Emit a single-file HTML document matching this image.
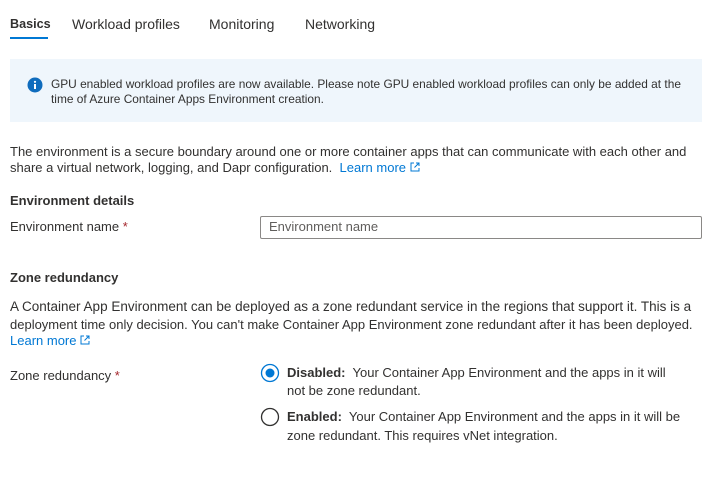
<!DOCTYPE html>
<html><head><meta charset="utf-8"><style>
body{margin:0;width:716px;height:479px;background:#fff;font-family:"Liberation Sans",sans-serif;font-size:13px;color:#323130;position:relative;overflow:hidden}
.a{position:absolute;white-space:nowrap;line-height:16px}
.b{font-weight:bold}
.l{color:#0078d4}
.s{color:#a4262c}
.ext{display:inline-block;margin-left:4px;vertical-align:0px}
</style></head><body>
<div class="a" style="left:10px;top:16px;font-size:12.6px;font-weight:bold">Basics</div>
<div style="position:absolute;left:10px;top:37px;width:38px;height:2px;background:#0078d4"></div>
<div class="a" style="left:72px;top:16px;font-size:14px">Workload profiles</div>
<div class="a" style="left:209px;top:16px;font-size:14px">Monitoring</div>
<div class="a" style="left:305px;top:16px;font-size:14px">Networking</div>

<div style="position:absolute;left:10px;top:59px;width:692px;height:63px;background:#eff6fc"></div>
<svg style="position:absolute;left:27px;top:77px" width="16" height="16"><circle cx="8" cy="8" r="7.5" fill="#0f6cbd"/><rect x="7" y="7" width="2" height="5" fill="#fff"/><circle cx="8" cy="4.8" r="1.1" fill="#fff"/></svg>
<div class="a" style="left:51px;top:76px;font-size:11.9px">GPU enabled workload profiles are now available. Please note GPU enabled workload profiles can only be added at the</div>
<div class="a" style="left:51px;top:91px;font-size:11.9px">time of Azure Container Apps Environment creation.</div>

<div class="a" style="left:10px;top:144px">The environment is a secure boundary around one or more container apps that can communicate with each other and</div>
<div class="a" style="left:10px;top:160px">share a virtual network, logging, and Dapr configuration. &nbsp;<span class="l">Learn more</span><svg class="ext" width="10" height="10" viewBox="0 0 10 10"><path d="M4 1H1v8h8V6M6 1h3v3M9 1L4.5 5.5" fill="none" stroke="#0078d4" stroke-width="1"/></svg></div>

<div class="a b" style="left:10px;top:193px;font-size:13px">Environment details</div>
<div class="a" style="left:10px;top:219px">Environment name <span class="s">*</span></div>
<div style="position:absolute;left:260px;top:216px;width:440px;height:21px;border:1px solid #8a8886;border-radius:2px"></div>
<div class="a" style="left:269px;top:219px;color:#605e5c">Environment name</div>

<div class="a b" style="left:10px;top:270px;font-size:13px">Zone redundancy</div>
<div class="a" style="left:10px;top:299px;font-size:13.5px">A Container App Environment can be deployed as a zone redundant service in the regions that support it. This is a</div>
<div class="a" style="left:10px;top:317px">deployment time only decision. You can't make Container App Environment zone redundant after it has been deployed.</div>
<div class="a" style="left:10px;top:333px"><span class="l">Learn more</span><svg class="ext" width="10" height="10" viewBox="0 0 10 10"><path d="M4 1H1v8h8V6M6 1h3v3M9 1L4.5 5.5" fill="none" stroke="#0078d4" stroke-width="1"/></svg></div>

<div class="a" style="left:10px;top:368px">Zone redundancy <span class="s">*</span></div>
<svg style="position:absolute;left:260px;top:363px" width="20" height="20"><circle cx="10" cy="10" r="8.5" fill="#fff" stroke="#0078d4" stroke-width="1.3"/><circle cx="10" cy="10" r="4.5" fill="#0078d4"/></svg>
<div class="a" style="left:287px;top:365px"><b>Disabled:</b>&nbsp; Your Container App Environment and the apps in it will</div>
<div class="a" style="left:287px;top:383px">not be zone redundant.</div>
<svg style="position:absolute;left:260px;top:407px" width="20" height="20"><circle cx="10" cy="10" r="8.5" fill="#fff" stroke="#323130" stroke-width="1.3"/></svg>
<div class="a" style="left:287px;top:409px"><b>Enabled:</b>&nbsp; Your Container App Environment and the apps in it will be</div>
<div class="a" style="left:287px;top:428px">zone redundant. This requires vNet integration.</div>
</body></html>
